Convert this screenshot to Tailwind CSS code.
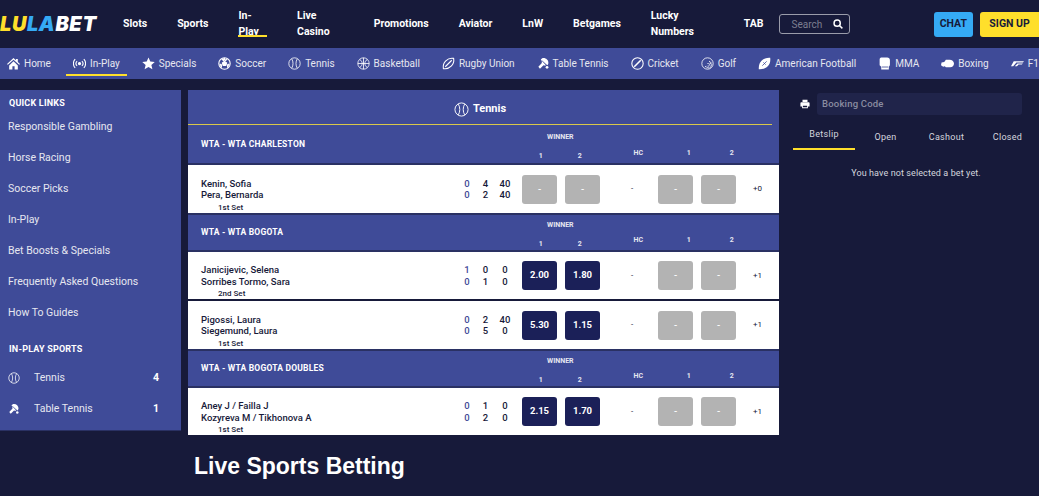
<!DOCTYPE html>
<html>
<head>
    <title>Lulabet - In-Play</title>
    <script src="https://cdn.jsdelivr.net/npm/@tailwindcss/browser@4"></script>
</head>
<body class="h-[496px] w-[1039px] overflow-hidden bg-[#171a3a] font-['Roboto',sans-serif] text-white">
    <svg class="hidden">
        <symbol id="ball" viewBox="0 0 24 24" fill="none" stroke="currentColor" stroke-width="1.5">
            <circle cx="12" cy="12" r="10.5"/><path d="M7 3.5c3 5 3 12 0 17M17 3.5c-3 5-3 12 0 17"/>
        </symbol>
        <symbol id="paddle" viewBox="0 0 24 24" fill="currentColor">
            <path d="M12 2c5 0 9 4 9 8.500 0 2-.8 3.500-2 4.500L9.500 6.500C9 7.500 8.500 9 9 11l-6.500 7 3 3.500L12 15c1.500.7 3 .7 4.500.2L7 5c1.300-2 3-3 5-3z"/>
            <circle cx="18.500" cy="19" r="2.500"/>
        </symbol>
    </svg>

    <header class="flex h-[48px] items-center">
        <a class="w-[123px] shrink-0 text-[20px] leading-none font-black italic tracking-[0.6px] font-['Inter',sans-serif]"><span class="text-[#ffdf2b]">LU</span><span class="text-[#35aaf5]">LA</span><span>BET</span></a>
        <nav class="flex h-full items-center gap-[30px] text-[10.5px] font-bold">
            <a>Slots</a>
            <a>Sports</a>
            <a class="relative flex h-full items-center">In-Play<span class="absolute bottom-[11px] left-0 h-[2px] w-full bg-[#ffdf2b]"></span></a>
            <a>Live Casino</a>
            <a>Promotions</a>
            <a>Aviator</a>
            <a>LnW</a>
            <a>Betgames</a>
            <a>Lucky Numbers</a>
            <a>TAB</a>
        </nav>
        <div class="ml-[16px] flex h-[20px] w-[72px] items-center justify-between rounded-[3px] border border-[#9a9caa] pr-[6px] pl-[11px] text-[10px] text-[#7c7e90]">
            <span>Search</span>
            <svg class="h-[10px] w-[10px] text-white" viewBox="0 0 24 24" fill="none" stroke="currentColor" stroke-width="3.500"><circle cx="10" cy="10" r="7.500"/><path d="M16 16l6.500 6.500"/></svg>
        </div>
        <button class="ml-[84px] h-[25px] w-[41px] rounded-[3px] bg-[#35aaf5] text-[10.5px] font-bold text-[#171a3a]">CHAT</button>
        <button class="ml-[7px] h-[25px] w-[61px] rounded-l-[3px] bg-[#ffdf2b] text-[10.5px] font-bold text-[#171a3a]">SIGN UP</button>
    </header>

    <nav class="flex h-[31px] items-center gap-[8px] overflow-hidden whitespace-nowrap bg-[#3f4b98] text-[10px] text-[#e6e7f0]">
        <a class="flex h-full shrink-0 items-center gap-[4px] px-[7px]">
            <svg class="h-[13px] w-[13px] text-white" viewBox="0 0 24 24" fill="currentColor"><path d="M12 2 0 13l1.500 1.500L12 5l10.500 9.500L24 13l-4-3.700V3.500h-3.500v2.600zM4 15.500V23h6v-6h4v6h6v-7.500L12 8z"/></svg>
            Home
        </a>
        <a class="relative flex h-full shrink-0 items-center gap-[4px] px-[7px]">
            <svg class="h-[13px] w-[13px] text-white" viewBox="0 0 24 24" fill="none" stroke="currentColor" stroke-width="2"><circle cx="12" cy="12" r="2" fill="currentColor"/><path d="M7.500 7.500a6.500 6.500 0 0 0 0 9M16.500 7.500a6.500 6.500 0 0 1 0 9M4 4a11.500 11.500 0 0 0 0 16M20 4a11.500 11.500 0 0 1 0 16"/></svg>
            In-Play
            <span class="absolute bottom-[3px] left-0 h-[2px] w-full bg-[#ffdf2b]"></span>
        </a>
        <a class="flex h-full shrink-0 items-center gap-[4px] px-[7px]">
            <svg class="h-[13px] w-[13px] text-white" viewBox="0 0 24 24" fill="currentColor"><path d="m12 1 3.300 7.500 8.200.8-6.200 5.400 1.900 8L12 18.500l-7.200 4.200 1.900-8L.5 9.300l8.200-.8z"/></svg>
            Specials
        </a>
        <a class="flex h-full shrink-0 items-center gap-[4px] px-[7px]">
            <svg class="h-[13px] w-[13px] text-white" viewBox="0 0 24 24" fill="none" stroke="currentColor" stroke-width="2"><circle cx="12" cy="12" r="10.500"/><path fill="currentColor" d="m12 8 4 3-1.500 4.500h-5L8 11zM12 2v3l-2 1.500L7 4M12 5l2 1.500L17 4M3 13l3 1 .5 3-1 3M21 13l-3 1-.5 3 1 3"/></svg>
            Soccer
        </a>
        <a class="flex h-full shrink-0 items-center gap-[4px] px-[7px]">
            <svg class="h-[13px] w-[13px] text-white"><use href="#ball"/></svg>
            Tennis
        </a>
        <a class="flex h-full shrink-0 items-center gap-[4px] px-[7px]">
            <svg class="h-[13px] w-[13px] text-white" viewBox="0 0 24 24" fill="none" stroke="currentColor" stroke-width="1.500"><circle cx="12" cy="12" r="10.500"/><path d="M1.500 12h21M12 1.500v21M5 4.500c3 2 4.500 4.500 4.500 7.500S8 17.500 5 19.500M19 4.500c-3 2-4.500 4.500-4.500 7.500s1.500 5.500 4.500 7.500"/></svg>
            Basketball
        </a>
        <a class="flex h-full shrink-0 items-center gap-[4px] px-[7px]">
            <svg class="h-[13px] w-[13px] text-white" viewBox="0 0 24 24" fill="none" stroke="currentColor" stroke-width="2"><path d="M21.500 2.500c1 6-1 11-4.500 14.500s-8.500 5.500-14.500 4.500C1.500 15.500 3.500 10.500 7 7s8.500-5.500 14.500-4.500zM6 18 18 6"/></svg>
            Rugby Union
        </a>
        <a class="flex h-full shrink-0 items-center gap-[3px] px-[7px]">
            <svg class="h-[13px] w-[13px] text-white"><use href="#paddle"/></svg>
            Table Tennis
        </a>
        <a class="flex h-full shrink-0 items-center gap-[4px] px-[7px]">
            <svg class="h-[13px] w-[13px] text-white" viewBox="0 0 24 24" fill="none" stroke="currentColor" stroke-width="2"><circle cx="12" cy="12" r="10.500"/><path stroke-width="3" d="M6 18 18 6"/></svg>
            Cricket
        </a>
        <a class="flex h-full shrink-0 items-center gap-[4px] px-[7px]">
            <svg class="h-[13px] w-[13px] text-white" viewBox="0 0 24 24" fill="none" stroke="currentColor" stroke-width="1.500"><circle cx="12" cy="12" r="10.500"/><path stroke-dasharray="1.500 1.500" stroke-width="2.500" d="M15 8a6 6 0 1 1-7 8M17 11a6 6 0 0 1-6 6M13 11a2 2 0 0 1-2 2"/></svg>
            Golf
        </a>
        <a class="flex h-full shrink-0 items-center gap-[4px] px-[7px]">
            <svg class="h-[13px] w-[13px] text-white" viewBox="0 0 24 24" fill="currentColor"><path d="M22.500 1.500c1 7-1 12-4.500 15.500S9 23 1.500 22.500C1 15.500 3 10.500 6.500 7s9-6 16-5.500z"/><path stroke="#3f4b98" stroke-width="1.500" d="m8 16 8-8M10 10l4 4"/></svg>
            American Football
        </a>
        <a class="flex h-full shrink-0 items-center gap-[4px] px-[7px]">
            <svg class="h-[13px] w-[13px] text-white" viewBox="0 0 24 24" fill="currentColor"><path d="M6 1h11c3 0 5 2 5 5v8c0 2-1 3-2 4v5H6v-5l-3-3V5c0-2 1-4 3-4z"/><path stroke="#3f4b98" stroke-width="1.500" d="M7 18.500h12"/></svg>
            MMA
        </a>
        <a class="flex h-full shrink-0 items-center gap-[4px] px-[7px]">
            <svg class="h-[13px] w-[13px] text-white" viewBox="0 0 24 24" fill="currentColor"><path d="M9 5h7c4 0 8 3 8 7s-3 7-7 7H9l-2-2-3 1-4-3 1-5 5-1z"/></svg>
            Boxing
        </a>
        <a class="flex h-full shrink-0 items-center gap-[4px] px-[7px]">
            <svg class="h-[13px] w-[13px] text-white" viewBox="0 0 24 24" fill="currentColor"><path d="M5 8h19l-2 2H10l-6 7H0zM12 12h10l-2 2h-6l-3 3H7z"/></svg>
            F1
        </a>
        <a class="flex h-full shrink-0 items-center gap-[4px] px-[7px]">
            <svg class="h-[13px] w-[13px] text-white"><use href="#ball"/></svg>
            Baseball
        </a>
    </nav>

    <main class="mt-[11px] flex items-start">
        <aside class="h-[340px] w-[181px] shrink-0 bg-[#3f4b98] shadow-[0_1px_0_#2a3163]">
            <h3 class="pt-[8px] pl-[9px] text-[9px] leading-[10px] font-bold tracking-[0.2px]">QUICK LINKS</h3>
            <ul class="mt-[3px] text-[10.5px] text-[#e6e7f0]">
                <li class="flex h-[31px] items-center pl-[8px]">Responsible Gambling</li>
                <li class="flex h-[31px] items-center pl-[8px]">Horse Racing</li>
                <li class="flex h-[31px] items-center pl-[8px]">Soccer Picks</li>
                <li class="flex h-[31px] items-center pl-[8px]">In-Play</li>
                <li class="flex h-[31px] items-center pl-[8px]">Bet Boosts &amp; Specials</li>
                <li class="flex h-[31px] items-center pl-[8px]">Frequently Asked Questions</li>
                <li class="flex h-[31px] items-center pl-[8px]">How To Guides</li>
            </ul>
            <h3 class="mt-[16px] pl-[9px] text-[9px] leading-[10px] font-bold tracking-[0.2px]">IN-PLAY SPORTS</h3>
            <ul class="mt-[8px] text-[10.5px] text-[#e6e7f0]">
                <li class="flex h-[31px] items-center pr-[22px] pl-[8px]">
                    <svg class="mr-[14px] h-[12px] w-[12px] text-white"><use href="#ball"/></svg>
                    Tennis<span class="ml-auto font-bold text-white">4</span>
                </li>
                <li class="flex h-[31px] items-center pr-[22px] pl-[8px]">
                    <svg class="mr-[14px] h-[12px] w-[12px] text-white"><use href="#paddle"/></svg>
                    Table Tennis<span class="ml-auto font-bold text-white">1</span>
                </li>
            </ul>
        </aside>

        <section class="ml-[7px] w-[591px] shrink-0">
            <div class="bg-[#3f4b98] pr-[7px]">
                <div class="flex h-[35px] items-center justify-center gap-[4px] border-b border-[#d9c84a] pt-[4px] text-[11px] font-bold">
                    <svg class="h-[15px] w-[15px]"><use href="#ball"/></svg>
                    Tennis
                </div>
            </div>

            <!-- WTA Charleston -->
            <div class="flex h-[40px] items-center border-b-2 border-[#2a3163] bg-[#3f4b98] pl-[13px] text-[8.5px] font-bold tracking-[0.2px]">
                <span class="w-[321px]">WTA - WTA CHARLESTON</span>
                <div class="w-[78px] self-stretch pt-[8px] text-center text-[7px] leading-[8px] tracking-normal text-[#e6e7f0]">WINNER<div class="mt-[11px] flex"><span class="w-[43px]">1</span><span class="w-[43px]">2</span></div></div>
                <div class="ml-[10px] flex w-[170px] self-stretch pt-[24px] text-[7px] leading-[8px] text-[#e6e7f0]"><span class="w-[58px] text-center">HC</span><span class="w-[43px] text-center">1</span><span class="w-[43px] text-center">2</span></div>
            </div>
            <div class="relative flex h-[48px] items-center bg-white pl-[13px] text-[9.500px] font-medium text-[#171a3a]">
                <div class="w-[257px] leading-[11.500px]"><div>Kenin, Sofia</div><div>Pera, Bernarda</div></div>
                <div class="flex w-[64px] flex-wrap leading-[11.500px] font-medium"><span class="w-[18px] text-center text-[#3f4b98]">0</span><span class="w-[19px] text-center">4</span><span class="w-[20px] text-center">40</span><span class="w-[18px] text-center text-[#3f4b98]">0</span><span class="w-[19px] text-center">2</span><span class="w-[20px] text-center">40</span></div>
                <span class="flex h-[29px] w-[35px] items-center justify-center rounded-[3px] bg-[#b3b3b3] text-white">-</span>
                <span class="ml-[8px] flex h-[29px] w-[35px] items-center justify-center rounded-[3px] bg-[#b3b3b3] text-white">-</span>
                <span class="w-[58px] pl-[6px] text-center text-[8px] font-normal">-</span>
                <span class="flex h-[29px] w-[35px] items-center justify-center rounded-[3px] bg-[#b3b3b3] text-white">-</span>
                <span class="ml-[8px] flex h-[29px] w-[35px] items-center justify-center rounded-[3px] bg-[#b3b3b3] text-white">-</span>
                <span class="w-[43px] text-center text-[8px] font-normal">+0</span>
                <span class="absolute bottom-0 left-[30px] text-[8px] leading-[10px]">1st Set</span>
            </div>

            <!-- WTA Bogota -->
            <div class="flex h-[39px] items-center border-y-2 border-[#2a3163] bg-[#3f4b98] pl-[13px] text-[8.5px] font-bold tracking-[0.2px]">
                <span class="w-[321px]">WTA - WTA BOGOTA</span>
                <div class="w-[78px] self-stretch pt-[6px] text-center text-[7px] leading-[8px] tracking-normal text-[#e6e7f0]">WINNER<div class="mt-[11px] flex"><span class="w-[43px]">1</span><span class="w-[43px]">2</span></div></div>
                <div class="ml-[10px] flex w-[170px] self-stretch pt-[21px] text-[7px] leading-[8px] text-[#e6e7f0]"><span class="w-[58px] text-center">HC</span><span class="w-[43px] text-center">1</span><span class="w-[43px] text-center">2</span></div>
            </div>
            <div class="relative flex h-[47px] items-center bg-white pl-[13px] text-[9.500px] font-medium text-[#171a3a]">
                <div class="w-[257px] leading-[11.500px]"><div>Janicijevic, Selena</div><div>Sorribes Tormo, Sara</div></div>
                <div class="flex w-[64px] flex-wrap leading-[11.500px]"><span class="w-[18px] text-center text-[#3f4b98]">1</span><span class="w-[19px] text-center">0</span><span class="w-[20px] text-center">0</span><span class="w-[18px] text-center text-[#3f4b98]">0</span><span class="w-[19px] text-center">1</span><span class="w-[20px] text-center">0</span></div>
                <span class="flex h-[29px] w-[35px] items-center justify-center rounded-[3px] bg-[#1b2058] font-bold text-white">2.00</span>
                <span class="ml-[8px] flex h-[29px] w-[35px] items-center justify-center rounded-[3px] bg-[#1b2058] font-bold text-white">1.80</span>
                <span class="w-[58px] pl-[6px] text-center text-[8px] font-normal">-</span>
                <span class="flex h-[29px] w-[35px] items-center justify-center rounded-[3px] bg-[#b3b3b3] text-white">-</span>
                <span class="ml-[8px] flex h-[29px] w-[35px] items-center justify-center rounded-[3px] bg-[#b3b3b3] text-white">-</span>
                <span class="w-[43px] text-center text-[8px] font-normal">+1</span>
                <span class="absolute bottom-0 left-[30px] text-[8px] leading-[10px]">2nd Set</span>
            </div>
            <div class="relative mt-[2px] flex h-[48px] items-center bg-white pl-[13px] text-[9.500px] font-medium text-[#171a3a]">
                <div class="w-[257px] leading-[11.500px]"><div>Pigossi, Laura</div><div>Siegemund, Laura</div></div>
                <div class="flex w-[64px] flex-wrap leading-[11.500px]"><span class="w-[18px] text-center text-[#3f4b98]">0</span><span class="w-[19px] text-center">2</span><span class="w-[20px] text-center">40</span><span class="w-[18px] text-center text-[#3f4b98]">0</span><span class="w-[19px] text-center">5</span><span class="w-[20px] text-center">0</span></div>
                <span class="flex h-[29px] w-[35px] items-center justify-center rounded-[3px] bg-[#1b2058] font-bold text-white">5.30</span>
                <span class="ml-[8px] flex h-[29px] w-[35px] items-center justify-center rounded-[3px] bg-[#1b2058] font-bold text-white">1.15</span>
                <span class="w-[58px] pl-[6px] text-center text-[8px] font-normal">-</span>
                <span class="flex h-[29px] w-[35px] items-center justify-center rounded-[3px] bg-[#b3b3b3] text-white">-</span>
                <span class="ml-[8px] flex h-[29px] w-[35px] items-center justify-center rounded-[3px] bg-[#b3b3b3] text-white">-</span>
                <span class="w-[43px] text-center text-[8px] font-normal">+1</span>
                <span class="absolute bottom-0 left-[30px] text-[8px] leading-[10px]">1st Set</span>
            </div>

            <!-- WTA Bogota Doubles -->
            <div class="flex h-[39px] items-center border-y-2 border-[#2a3163] bg-[#3f4b98] pl-[13px] text-[8.5px] font-bold tracking-[0.2px]">
                <span class="w-[321px]">WTA - WTA BOGOTA DOUBLES</span>
                <div class="w-[78px] self-stretch pt-[6px] text-center text-[7px] leading-[8px] tracking-normal text-[#e6e7f0]">WINNER<div class="mt-[11px] flex"><span class="w-[43px]">1</span><span class="w-[43px]">2</span></div></div>
                <div class="ml-[10px] flex w-[170px] self-stretch pt-[21px] text-[7px] leading-[8px] text-[#e6e7f0]"><span class="w-[58px] text-center">HC</span><span class="w-[43px] text-center">1</span><span class="w-[43px] text-center">2</span></div>
            </div>
            <div class="relative flex h-[47px] items-center bg-white pl-[13px] text-[9.500px] font-medium text-[#171a3a]">
                <div class="w-[257px] leading-[11.500px]"><div>Aney J / Failla J</div><div>Kozyreva M / Tikhonova A</div></div>
                <div class="flex w-[64px] flex-wrap leading-[11.500px]"><span class="w-[18px] text-center text-[#3f4b98]">0</span><span class="w-[19px] text-center">1</span><span class="w-[20px] text-center">0</span><span class="w-[18px] text-center text-[#3f4b98]">0</span><span class="w-[19px] text-center">2</span><span class="w-[20px] text-center">0</span></div>
                <span class="flex h-[29px] w-[35px] items-center justify-center rounded-[3px] bg-[#1b2058] font-bold text-white">2.15</span>
                <span class="ml-[8px] flex h-[29px] w-[35px] items-center justify-center rounded-[3px] bg-[#1b2058] font-bold text-white">1.70</span>
                <span class="w-[58px] pl-[6px] text-center text-[8px] font-normal">-</span>
                <span class="flex h-[29px] w-[35px] items-center justify-center rounded-[3px] bg-[#b3b3b3] text-white">-</span>
                <span class="ml-[8px] flex h-[29px] w-[35px] items-center justify-center rounded-[3px] bg-[#b3b3b3] text-white">-</span>
                <span class="w-[43px] text-center text-[8px] font-normal">+1</span>
                <span class="absolute bottom-0 left-[30px] text-[8px] leading-[10px]">1st Set</span>
            </div>

            <h1 class="mt-[17px] pl-[6px] font-['Liberation_Sans',sans-serif] text-[23px] leading-[28px] font-bold">Live Sports Betting</h1>
        </section>

        <aside class="ml-[14px] w-[246px] shrink-0 text-[#d5d6de]">
            <div class="mt-[3px] flex h-[22px] items-center pl-[7px]">
                <svg class="h-[10px] w-[10px] text-white" viewBox="0 0 24 24" fill="currentColor"><path d="M6 2h12v5H6zM3 8h18a2 2 0 0 1 2 2v8h-4v4H5v-4H1v-8a2 2 0 0 1 2-2zm4 8v4h10v-4z"/></svg>
                <div class="ml-[7px] flex h-full w-[205px] items-center rounded-[3px] bg-[#20244a] pl-[5px] text-[9.500px] font-medium tracking-[0.2px] text-[#8a8ca0]">Booking Code</div>
            </div>
            <div class="mt-[10px] flex h-[25px] w-[246px] text-[9px] tracking-[0.3px]">
                <a class="flex w-[62px] items-center justify-center border-b-2 border-[#ffdf2b] pb-[3px]">Betslip</a>
                <a class="flex w-[61px] items-center justify-center">Open</a>
                <a class="flex w-[61px] items-center justify-center">Cashout</a>
                <a class="flex w-[61px] items-center justify-center">Closed</a>
            </div>
            <p class="mt-[17px] text-center text-[9px] tracking-[0.1px]">You have not selected a bet yet.</p>
        </aside>
    </main>
</body>
</html>
